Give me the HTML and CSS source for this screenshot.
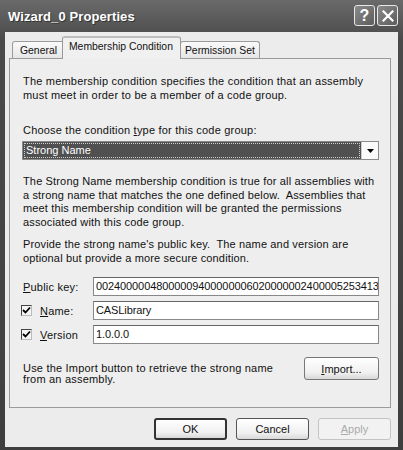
FILE: index.html
```html
<!DOCTYPE html>
<html lang="en">
<head>
    <meta charset="UTF-8">
    <title>Wizard_0 Properties</title>
    <link rel="stylesheet" href="styles.css">
</head>
<body>
    <div class="window">
        <div class="titlebar">
            <span class="title">Wizard_0 Properties</span>
            <div class="caption-buttons">
                <span class="cap-btn">?</span>
                <span class="cap-btn">
                    <svg width="12" height="12" viewBox="0 0 12 12">
                        <path d="M1.5 1.5 L10.5 10.5 M10.5 1.5 L1.5 10.5" stroke="#fff" stroke-width="2.2" stroke-linecap="square"/>
                    </svg>
                </span>
            </div>
        </div>

        <div class="client">
            <div class="tabs">
                <span class="tab general">General</span>
                <span class="tab active">Membership Condition</span>
                <span class="tab">Permission Set</span>
            </div>

            <div class="panel">
                <p class="intro">The membership condition specifies the condition that an assembly must meet in order to be a member of a code group.</p>

                <div class="combo-label">Choose the condition <u>t</u>ype for this code group:</div>
                <div class="combo">
                    <span class="combo-value"><span class="focus">Strong Name</span></span>
                    <span class="combo-arrow">
                        <svg width="7" height="4" viewBox="0 0 7 4"><path d="M0 0 H7 L3.5 4 Z" fill="#000"/></svg>
                    </span>
                </div>

                <p class="desc">The Strong Name membership condition is true for all assemblies with a strong name that matches the one defined below.&nbsp; Assemblies that meet this membership condition will be granted the permissions associated with this code group.</p>

                <p class="desc note">Provide the strong name's public key.&nbsp; The name and version are optional but provide a more secure condition.</p>

                <div class="fields">
                    <label class="field-label"><span><u>P</u>ublic key:</span></label>
                    <div class="textbox">00240000048000009400000006020000002400005253413</div>

                    <label class="field-label">
                        <span class="checkbox">
                            <svg width="9" height="9" viewBox="0 0 9 9"><path d="M1 4 L3.5 6.5 L8 1.5" stroke="#000" stroke-width="1.8" fill="none"/></svg>
                        </span>
                        <span><u>N</u>ame:</span>
                    </label>
                    <div class="textbox">CASLibrary</div>

                    <label class="field-label">
                        <span class="checkbox">
                            <svg width="9" height="9" viewBox="0 0 9 9"><path d="M1 4 L3.5 6.5 L8 1.5" stroke="#000" stroke-width="1.8" fill="none"/></svg>
                        </span>
                        <span><u>V</u>ersion</span>
                    </label>
                    <div class="textbox">1.0.0.0</div>
                </div>

                <div class="import-row">
                    <p>Use the Import button to retrieve the strong name from an assembly.</p>
                    <button class="btn import-btn"><u>I</u>mport...</button>
                </div>
            </div>

            <div class="actions">
                <button class="btn default">OK</button>
                <button class="btn">Cancel</button>
                <button class="btn disabled"><u>A</u>pply</button>
            </div>
        </div>
    </div>
</body>
</html>
```

FILE: styles.css
```css
body {
    margin: 0;
    background-color: #3c3c3c;
    font-family: 'Liberation Sans', Arial, sans-serif;
    font-size: 11px;
    color: #111;
}

.window {
    width: 403px;
    height: 450px;
    box-sizing: border-box;
    padding: 0 5px 3px 5px;
    background: linear-gradient(to bottom, #6a6a6a 0px, #4a4a4a 40px, #3e3e3e 100%);
    display: flex;
    flex-direction: column;
}

.titlebar {
    height: 32px;
    display: flex;
    align-items: center;
    justify-content: space-between;
    padding: 0 0 0 3px;
}

.title {
    color: #fff;
    font-size: 13px;
    font-weight: bold;
    letter-spacing: 0.1px;
    text-shadow: 1px 1px 0 #333;
}

.caption-buttons {
    display: flex;
    gap: 2px;
    margin-top: -1px;
}

.cap-btn {
    width: 19px;
    height: 19px;
    border: 1px solid #e8e8e8;
    border-radius: 3px;
    background: linear-gradient(to bottom right, #8a8a8a, #5c5c5c);
    color: #fff;
    font-size: 16px;
    font-weight: bold;
    display: flex;
    align-items: center;
    justify-content: center;
}

.client {
    flex: 1;
    background-color: #ececec;
    padding: 4px 7px 0 4px;
    display: flex;
    flex-direction: column;
}

.tabs {
    display: flex;
    align-items: flex-end;
    height: 22px;
    padding-left: 3px;
    font-size: 10.4px;
}

.tab {
    height: 17px;
    line-height: 18px;
    padding: 0 4px;
    border: 1px solid #9a9a9a;
    border-bottom: none;
    border-radius: 3px 3px 0 0;
    background: linear-gradient(to bottom, #fafafa, #e6e6e6);
    box-sizing: border-box;
    margin-right: -1px;
}

.tab.general {
    padding: 0 7px;
}

.tab.active {
    height: 23px;
    line-height: 17px;
    padding: 0 7px 0 6px;
    margin: 0 -1px -1px -2px;
    background: #f0f0f0;
    border-top: 2px solid #bdbdbd;
    position: relative;
}

.panel {
    height: 350px;
    box-sizing: border-box;
    border: 1px solid #9a9a9a;
    background-color: #eeeeee;
    padding: 15px 11px 0 13px;
    letter-spacing: 0.2px;
}

.panel p {
    margin: 0;
}

.intro {
    line-height: 14px;
}

.combo-label {
    margin-top: 21px;
    line-height: 14px;
}

.combo {
    margin-top: 4px;
    height: 17px;
    border: 1px solid #8a8a8a;
    margin-left: -1px;
    display: flex;
    background-color: #fff;
    letter-spacing: 0;
}

.combo-value {
    flex: 1;
    background-color: #505050;
    padding: 1px;
    display: flex;
}

.focus {
    flex: 1;
    color: #fff;
    border: 1px dotted #cfcfcf;
    line-height: 13px;
    padding-left: 1px;
}

.combo-arrow {
    width: 16px;
    display: flex;
    align-items: center;
    justify-content: center;
    background: #fafafa;
    border-left: 1px solid #ccc;
}

.desc {
    line-height: 13.5px;
    letter-spacing: 0.15px;
    margin-top: 15px !important;
}

.desc.note {
    margin-top: 9px !important;
}

.fields {
    margin-top: 12px;
    display: grid;
    grid-template-columns: 70px 1fr;
    row-gap: 5px;
}

.field-label {
    display: flex;
    align-items: center;
    gap: 8px;
    margin-left: -2px;
}

.field-label:first-child {
    margin-left: 0;
}

.checkbox {
    width: 11px;
    height: 11px;
    box-sizing: border-box;
    border: 1px solid #444;
    border-right-color: #bbb;
    border-bottom-color: #bbb;
    background-color: #f4f4f4;
    display: flex;
    align-items: center;
    justify-content: center;
}

.textbox {
    height: 19px;
    box-sizing: border-box;
    border: 1px solid #888;
    border-top-color: #666;
    background-color: #fff;
    line-height: 17px;
    padding-left: 2px;
    overflow: hidden;
    white-space: nowrap;
    letter-spacing: -0.1px;
}

.import-row {
    margin-top: 13px;
    display: flex;
    justify-content: space-between;
    align-items: flex-start;
}

.import-row p {
    margin-top: 6px !important;
    line-height: 11px;
    width: 270px;
}

.btn {
    font-family: 'Liberation Sans', Arial, sans-serif;
    font-size: 11px;
    color: #111;
    height: 22px;
    border: 1px solid #555;
    border-radius: 3px;
    background: linear-gradient(to bottom, #ffffff, #f0f0f0 70%, #d8d8d8);
    padding: 0;
}

.import-btn {
    width: 75px;
    height: 23px;
    border-color: #777;
}

.actions {
    margin-top: 10px;
    display: flex;
    justify-content: flex-end;
    gap: 9px;
}

.actions .btn {
    width: 73px;
}

.btn.default {
    border: 2px solid #333;
}

.btn.disabled {
    color: #aaa;
    border-color: #c4c4c4;
    background: #f2f2f2;
}
```
